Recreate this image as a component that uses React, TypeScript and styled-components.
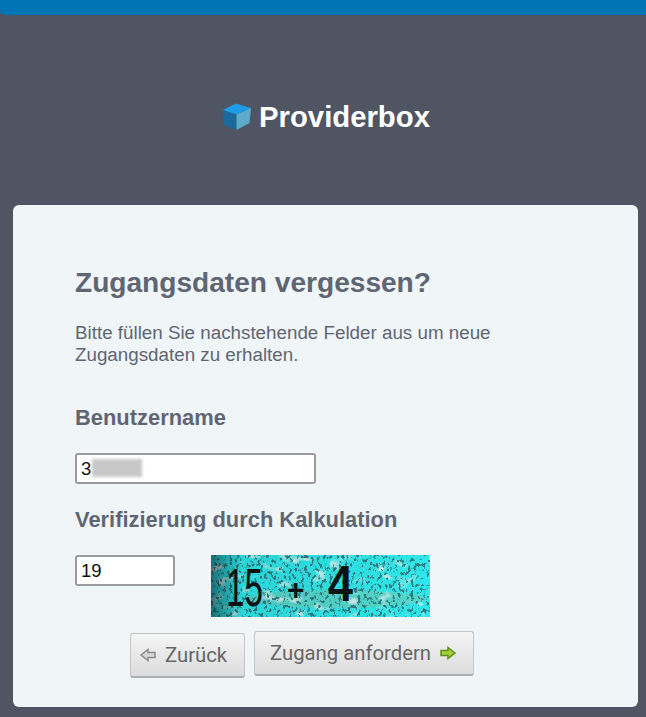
import React from "react";
import styled, { createGlobalStyle } from "styled-components";

const Global = createGlobalStyle`
  html, body { margin: 0; padding: 0; background: #4f5562; }
  body { font-family: "Liberation Sans", Arial, sans-serif; }
`;

const Page = styled.div`
  width: 646px;
  height: 717px;
  overflow: hidden;
  background: #4f5562;
  display: flex;
  flex-direction: column;
`;
const TopBar = styled.div`
  height: 15px;
  background: #0074b4;
  border-bottom-left-radius: 5px;
  flex: none;
`;
const Header = styled.header`
  height: 190px;
  flex: none;
  box-sizing: border-box;
  padding: 83px 0 0 221px;
`;
const Logo = styled.div`
  display: flex;
  align-items: center;
  gap: 6px;
  height: 36px;
`;
const LogoText = styled.span`
  color: #fff;
  font-size: 29.300px;
  font-weight: 700;
  line-height: 36px;
  padding-top: 2px;
`;
const Card = styled.main`
  margin-left: 13px;
  width: 625px;
  height: 502px;
  flex: none;
  box-sizing: border-box;
  background: #f0f5f8;
  border-radius: 6px;
  padding: 62px 0 0 62px;
  color: #5f6673;
`;
const Title = styled.h1`
  margin: 0 0 23px;
  font-size: 28.100px;
  line-height: 32px;
  font-weight: 700;
  color: #5f6673;
`;
const Intro = styled.p`
  margin: 0 0 39px;
  font-size: 18.800px;
  line-height: 22px;
  width: 480px;
`;
const FieldLabel = styled.label<{ $gap: number }>`
  display: block;
  font-size: 21.900px;
  line-height: 26px;
  font-weight: 700;
  margin-bottom: ${(p) => p.$gap}px;
`;
const InputWrap = styled.div`
  position: relative;
  width: 241px;
  height: 31px;
  margin-bottom: 23px;
`;
const TextInput = styled.input<{ $width: number }>`
  box-sizing: border-box;
  display: block;
  width: ${(p) => p.$width}px;
  height: 31px;
  border: 2px solid #9b9b9b;
  border-radius: 3px;
  background: #fff;
  padding: 0 4px;
  font: 18.500px "Liberation Sans", Arial, sans-serif;
  color: #111;
  outline: none;
`;
const Redaction = styled.div`
  position: absolute;
  left: 17px;
  top: 6px;
  width: 50px;
  height: 18px;
  background: #c8c8c8;
  filter: blur(1.500px);
`;
const VerifyRow = styled.div`
  display: flex;
  align-items: flex-start;
  gap: 36px;
`;
const Buttons = styled.div`
  display: flex;
  align-items: flex-start;
  gap: 9px;
  margin: 14px 0 0 55px;
`;
const Button = styled.button<{ $width: number; $offset: number; $inset: number }>`
  box-sizing: border-box;
  width: ${(p) => p.$width}px;
  height: 45px;
  margin-top: ${(p) => p.$offset}px;
  display: flex;
  align-items: center;
  justify-content: flex-start;
  gap: 9px;
  border: 1px solid #c3c5c7;
  border-bottom: 2px solid #acaeb0;
  border-radius: 3px;
  background: linear-gradient(#f5f5f5, #dcdcdc);
  color: #666;
  font: 20.300px Roboto, "Liberation Sans", sans-serif;
  padding: 0 0 0 ${(p) => p.$inset}px;
`;

const Cube = () => (
  <svg width="32" height="30" viewBox="0 0 32 30">
    <path d="M1.500 9 L15 2.500 L30 7 L15.500 13.500Z" fill="#1e9be6" />
    <path d="M1.500 9 L15.500 13.500 L15.500 29 L2.500 24Z" fill="#1c6a9c" />
    <path d="M15.500 13.500 L30 7 L28.500 22 L15.500 29Z" fill="#5cabcb" />
  </svg>
);

const Captcha = () => (
  <svg width="219" height="62" viewBox="0 0 219 62">
    <defs>
      <filter id="speckle" x="0" y="0" width="100%" height="100%">
        <feTurbulence type="fractalNoise" baseFrequency="0.32 0.24" numOctaves="3" seed="11" />
        <feColorMatrix
          type="matrix"
          values="0 0 0 0 0.03  0 0 0 0 0.2  0 0 0 0 0.22  0 0 0 9 -5"
        />
      </filter>
      <filter id="glow" x="0" y="0" width="100%" height="100%">
        <feTurbulence type="fractalNoise" baseFrequency="0.06 0.1" numOctaves="2" seed="3" />
        <feColorMatrix
          type="matrix"
          values="0 0 0 0 0.68  0 0 0 0 0.88  0 0 0 0 0.86  0 0 0 5 -2.900"
        />
      </filter>
      <linearGradient id="shade" x1="0" x2="1" y1="0" y2="0">
        <stop offset="0" stopColor="#04252a" stopOpacity="0.6" />
        <stop offset="0.14" stopColor="#04252a" stopOpacity="0.1" />
        <stop offset="1" stopColor="#04252a" stopOpacity="0" />
      </linearGradient>
    </defs>
    <rect width="219" height="62" fill="#2fe8ea" />
    <ellipse cx="125" cy="44" rx="90" ry="9" fill="#55d8cc" />
    <rect width="219" height="62" filter="url(#glow)" />
    <rect width="219" height="62" filter="url(#speckle)" />
    <rect width="219" height="62" fill="url(#shade)" />
    <text
      x="15"
      y="50.500"
      fontFamily="'Liberation Sans', sans-serif"
      fontSize="53"
      fill="#0a1214"
      textLength="37"
      lengthAdjust="spacingAndGlyphs"
    >
      15
    </text>
    <text
      x="76"
      y="45"
      fontFamily="'Liberation Sans', sans-serif"
      fontSize="30"
      fontWeight="700"
      fill="#0a1214"
    >
      +
    </text>
    <text
      x="117"
      y="46"
      fontFamily="'Liberation Sans', sans-serif"
      fontSize="50"
      fontWeight="700"
      fill="#0a1214"
      textLength="25"
      lengthAdjust="spacingAndGlyphs"
    >
      4
    </text>
  </svg>
);

const ArrowLeft = () => (
  <svg width="16" height="14" viewBox="0 0 16 14">
    <path d="M1 7 L8 1.500 V4.500 H15 V9.500 H8 V12.500Z" fill="#d8d8d8" stroke="#8b8b8b" strokeWidth="1.500" />
  </svg>
);
const ArrowRight = () => (
  <svg width="16" height="14" viewBox="0 0 16 14">
    <path d="M15 7 L8 1.500 V4.500 H1 V9.500 H8 V12.500Z" fill="#a6cf3d" stroke="#5f8f1c" strokeWidth="1.500" />
  </svg>
);

export default function App() {
  return (
    <Page>
      <Global />
      <TopBar />
      <Header>
        <Logo>
          <Cube />
          <LogoText>Providerbox</LogoText>
        </Logo>
      </Header>
      <Card>
        <Title>Zugangsdaten vergessen?</Title>
        <Intro>
          Bitte füllen Sie nachstehende Felder aus um neue Zugangsdaten zu erhalten.
        </Intro>
        <FieldLabel $gap={22}>Benutzername</FieldLabel>
        <InputWrap>
          <TextInput $width={241} defaultValue="3" />
          <Redaction />
        </InputWrap>
        <FieldLabel $gap={22}>Verifizierung durch Kalkulation</FieldLabel>
        <VerifyRow>
          <TextInput $width={100} defaultValue="19" />
          <Captcha />
        </VerifyRow>
        <Buttons>
          <Button $width={115} $offset={2} $inset={9}>
            <ArrowLeft />
            Zurück
          </Button>
          <Button $width={220} $offset={0} $inset={15}>
            Zugang anfordern
            <ArrowRight />
          </Button>
        </Buttons>
      </Card>
    </Page>
  );
}
